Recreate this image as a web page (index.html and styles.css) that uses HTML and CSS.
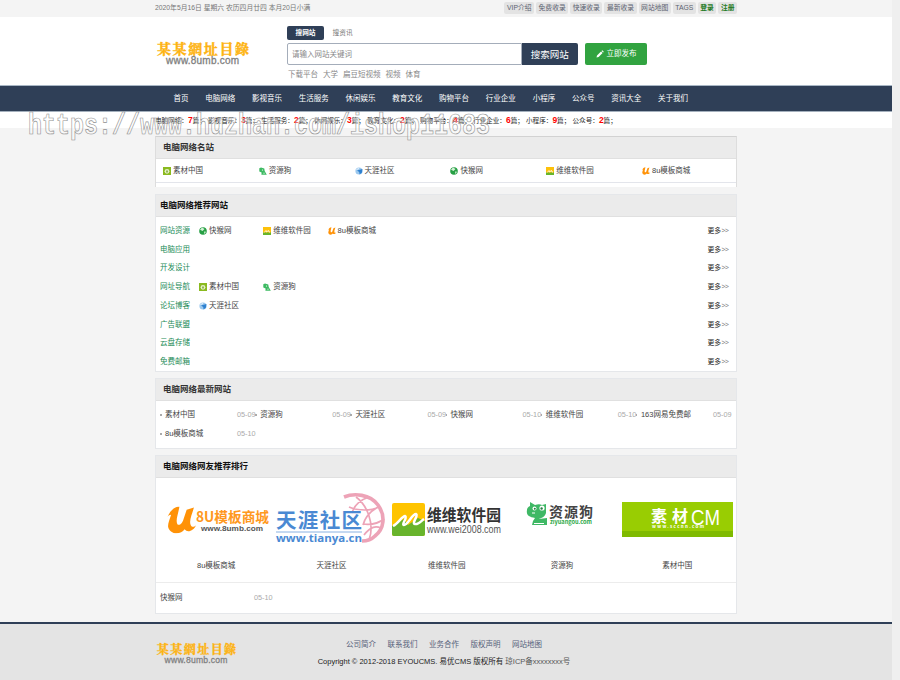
FILE: index.html
```
<!DOCTYPE html>
<html lang="zh-CN">
<head>
  <meta charset="UTF-8">
  <title>电脑网络 - 某某網址目錄</title>
  <link rel="stylesheet" href="styles.css">
</head>
<body>
  <!-- site icons -->
  <svg class="sprite">
    <symbol id="i-sccnn" viewBox="0 0 8 8"><rect width="8" height="8" fill="#8aba1f"/><circle cx="4" cy="4.3" r="2.4" fill="#e4efc8"/><path d="M3 3.5h2v2H3z" fill="#8fb652"/></symbol>
    <symbol id="i-dog" viewBox="0 0 8 8"><path d="M.3 1.2 2 .6l3.3.8.4 2.7L7.8 7.7H2.4L2.6 5.6.3 4.5z" fill="#3dba62"/><circle cx="3.5" cy="3" r=".6" fill="#fff"/><path d="M4 6.2h2" stroke="#fff" stroke-width=".5"/></symbol>
    <symbol id="i-tianya" viewBox="0 0 8 8"><circle cx="4" cy="4" r="3.6" fill="#9cc8ee"/><path d="M2 3.5 7.4 2 7 5.5 4.6 7.6 4.2 5z" fill="#2e80cf"/><path d="M1.5 2.5 4 1.5" stroke="#fff" stroke-width=".8"/></symbol>
    <symbol id="i-globe" viewBox="0 0 8 8"><circle cx="4" cy="4" r="3.8" fill="#27a044"/><path d="M3 .6 5.5 2 3.6 4 1 2.8zM5 4.6l2 .2-1.5 2.4z" fill="#d6f1d9"/></symbol>
    <symbol id="i-wei" viewBox="0 0 8 8"><rect width="8" height="8" fill="#fdc10a"/><path d="M0 5.5h8V8H0z" fill="#67b52b"/><path d="M1.2 5.5 3 3.5l.5 1.5 2-1.5.5 1.5h1" fill="none" stroke="#fff" stroke-width=".8"/></symbol>
    <symbol id="i-u" viewBox="0 0 28 26"><path d="M0 11C3 4 7 0 12 0c-1 7-4 13-2 17 2 2 5-1 6-5l3-9 7-2c-2 7-5 13-3 17 1 2 3 2 5 0-2 5-8 8-11 4-4 6-15 5-16-3C1 16 3 11 4 8c-2 0-3 1-4 3z" fill="#ff9207"/></symbol>
  </svg>

  <div class="topbar">
    <div class="wrap topbar-in">
      <span class="date">2020年5月16日 星期六 农历四月廿四 本月20日小满</span>
      <div class="top-links">
        <a>VIP介绍</a><a>免费收录</a><a>快速收录</a><a>最新收录</a><a>网站地图</a><a>TAGS</a><a class="user">登录</a><a class="user">注册</a>
      </div>
    </div>
  </div>

  <div class="header">
    <div class="wrap header-in">
      <svg class="logo" viewBox="0 0 94 30">
        <text class="logo-cn" x="1" y="14.5" textLength="92">某某網址目錄</text>
        <text class="logo-en" x="10" y="25" textLength="73">www.8umb.com</text>
      </svg>
      <div class="search">
        <div class="tabs"><span class="tab on">搜网站</span><span class="tab">搜资讯</span></div>
        <div class="search-row">
          <div class="field">请输入网站关键词</div>
          <div class="search-btn">搜索网站</div>
          <div class="post-btn">
            <svg viewBox="0 0 8 8"><path d="M.5 7.5 1 5.4 5 1.5 6.6 3 2.6 7zM5.5 1l.8-.8 1.5 1.5-.7.8z" fill="#fff"/></svg>立即发布
          </div>
        </div>
        <div class="hot"><a>下载平台</a><a>大学</a><a>扁豆短视频</a><a>视频</a><a>体育</a></div>
      </div>
    </div>
  </div>

  <div class="nav">
    <div class="wrap nav-in">
      <a>首页</a><a>电脑网络</a><a>影视音乐</a><a>生活服务</a><a>休闲娱乐</a><a>教育文化</a><a>购物平台</a><a>行业企业</a><a>小程序</a><a>公众号</a><a>资讯大全</a><a>关于我们</a>
    </div>
  </div>

  <div class="stats">
    <div class="wrap stats-in">
      <span>电脑网络：<b>7</b>篇；</span><span>影视音乐：<b>3</b>篇；</span><span>生活服务：<b>2</b>篇；</span><span>休闲娱乐：<b>3</b>篇；</span><span>教育文化：<b>2</b>篇；</span><span>购物平台：<b>4</b>篇；</span><span>行业企业：<b>6</b>篇；</span><span class="short">小程序：<b>9</b>篇；</span><span class="short">公众号：<b>2</b>篇；</span>
    </div>
  </div>

  <div class="wrap box famous">
    <h2>电脑网络名站</h2>
    <div class="famous-list">
      <a><svg><use href="#i-sccnn"/></svg>素材中国</a>
      <a><svg><use href="#i-dog"/></svg>资源狗</a>
      <a><svg><use href="#i-tianya"/></svg>天涯社区</a>
      <a><svg><use href="#i-globe"/></svg>快猴网</a>
      <a><svg><use href="#i-wei"/></svg>维维软件园</a>
      <a><svg><use href="#i-u"/></svg>8u模板商城</a>
    </div>
  </div>

  <div class="wrap box recommend">
    <h2>电脑网络推荐网站</h2>
    <div class="rows">
      <div class="row"><span class="cat">网站资源</span><a><svg><use href="#i-globe"/></svg>快猴网</a><a><svg><use href="#i-wei"/></svg>维维软件园</a><a><svg><use href="#i-u"/></svg>8u模板商城</a><span class="more">更多<i>&gt;&gt;</i></span></div>
      <div class="row"><span class="cat">电脑应用</span><span class="more">更多<i>&gt;&gt;</i></span></div>
      <div class="row"><span class="cat">开发设计</span><span class="more">更多<i>&gt;&gt;</i></span></div>
      <div class="row"><span class="cat">网址导航</span><a><svg><use href="#i-sccnn"/></svg>素材中国</a><a><svg><use href="#i-dog"/></svg>资源狗</a><span class="more">更多<i>&gt;&gt;</i></span></div>
      <div class="row"><span class="cat">论坛博客</span><a><svg><use href="#i-tianya"/></svg>天涯社区</a><span class="more">更多<i>&gt;&gt;</i></span></div>
      <div class="row"><span class="cat">广告联盟</span><span class="more">更多<i>&gt;&gt;</i></span></div>
      <div class="row"><span class="cat">云盘存储</span><span class="more">更多<i>&gt;&gt;</i></span></div>
      <div class="row"><span class="cat">免费邮箱</span><span class="more">更多<i>&gt;&gt;</i></span></div>
    </div>
  </div>

  <div class="wrap box newest">
    <h2>电脑网络最新网站</h2>
    <div class="new-list">
      <div class="new-item"><a>素材中国</a><em>05-09</em></div>
      <div class="new-item"><a>资源狗</a><em>05-09</em></div>
      <div class="new-item"><a>天涯社区</a><em>05-09</em></div>
      <div class="new-item"><a>快猴网</a><em>05-10</em></div>
      <div class="new-item"><a>维维软件园</a><em>05-10</em></div>
      <div class="new-item"><a>163网易免费邮</a><em>05-09</em></div>
      <div class="new-item"><a>8u模板商城</a><em>05-10</em></div>
    </div>
  </div>

  <div class="wrap box ranking">
    <h2>电脑网络网友推荐排行</h2>
    <div class="cards">
      <div class="card">
        <svg viewBox="0 0 115 70">
          <use href="#i-u" x="8" y="21.5" width="29" height="27"/>
          <text x="37" y="36.5" font-size="14" font-weight="700" fill="#ff9820" textLength="73" lengthAdjust="spacingAndGlyphs">8U模板商城</text>
          <text class="arial" x="42" y="46" font-size="8" font-weight="700" fill="#555" textLength="62" lengthAdjust="spacingAndGlyphs">www.8umb.com</text>
        </svg>
        <p>8u模板商城</p>
      </div>
      <div class="card">
        <svg viewBox="0 0 115 70">
          <g fill="none" stroke="#eda3b7">
            <path d="M70 12C80 8 96 9 104 20c8 11 6 24-3 31-4 4-8 5-13 5" stroke-width="3.6"/>
            <path d="M75 22c9 4 22 4 30 0M89 39c8 1 16-1 21-5M82 12c11 8 19 27 13 43M95 12c-9 3-15 9-17 16M104 22c-7 4-13 10-15 18M107 43c-5-2-10-2-17 7" stroke-width="1.7"/>
          </g>
          <text x="2" y="42.5" font-size="20.5" font-weight="700" fill="#4a89d3" textLength="86">天涯社区</text>
          <path d="M2 47h86" stroke="#6d9fda" stroke-width=".8"/>
          <text class="open" x="2" y="56.6" font-size="10" font-weight="700" fill="#4a89d3" textLength="86" lengthAdjust="spacingAndGlyphs">www.tianya.cn</text>
        </svg>
        <p>天涯社区</p>
      </div>
      <div class="card">
        <svg viewBox="0 0 115 70">
          <rect x="3" y="18" width="33" height="33" rx="2" fill="#ffc400"/>
          <path d="M3 41 15 34l4 6 10-7 7 3v13a2 2 0 0 1-2 2H5a2 2 0 0 1-2-2z" fill="#68b42c"/>
          <path d="M4 41c5-2 9-10 12-10 3 1-4 9-1 9 4 0 8-11 12-11 3 1-5 10-1 10 3 1 6-3 9-5" fill="none" stroke="#fff" stroke-width="2.4"/>
          <text x="38" y="35.5" font-size="16" font-weight="700" fill="#333" textLength="74" lengthAdjust="spacingAndGlyphs">维维软件园</text>
          <text class="arial" x="38" y="48" font-size="10.5" fill="#555" textLength="74" lengthAdjust="spacingAndGlyphs">www.wei2008.com</text>
        </svg>
        <p>维维软件园</p>
      </div>
      <div class="card">
        <svg viewBox="0 0 115 70">
          <path d="M26 21v-4l5 3c3-1 5-1 7 0l4-1v9c-1 4-5 5-7 6l8-1v7H28l1-4 2-3c-6-1-9-3-8-8 0-2 1-3 3-4z" fill="#3fb865"/>
          <circle cx="30.5" cy="23.5" r="2" fill="#fff"/><circle cx="38" cy="23" r="2.6" fill="#fff"/><circle cx="30.8" cy="23.7" r="1" fill="#277b43"/><circle cx="37.6" cy="23.5" r="1.2" fill="#277b43"/>
          <path d="M30 38.5h10M28 28h3" stroke="#fff" stroke-width="1"/>
          <text x="45" y="32" font-size="14" font-weight="700" fill="#444" textLength="44">资源狗</text>
          <text x="46" y="38.5" font-size="5.5" font-weight="700" fill="#28a745" textLength="42" lengthAdjust="spacingAndGlyphs">ziyuangou.com</text>
        </svg>
        <p>资源狗</p>
      </div>
      <div class="card">
        <svg viewBox="0 0 115 70">
          <rect x="2" y="17" width="111" height="35" fill="#99cd02"/>
          <rect x="2" y="46" width="111" height="6" fill="#7fba00"/>
          <text x="31" y="37" font-size="16" font-weight="700" fill="#fff" textLength="37">素材</text>
          <text class="arial" x="71" y="40" font-size="22" fill="#fff" textLength="29" lengthAdjust="spacingAndGlyphs">CM</text>
          <text x="32" y="43" font-size="4.5" font-weight="700" fill="#fff" textLength="52">www.sccnn.com</text>
        </svg>
        <p>素材中国</p>
      </div>
    </div>
    <div class="rank-row"><a>快猴网</a><em>05-10</em></div>
  </div>

  <div class="footer">
    <div class="wrap footer-in">
      <svg class="foot-logo" viewBox="0 0 94 30">
        <text class="logo-cn" x="1" y="14.5" textLength="92">某某網址目錄</text>
        <text class="logo-en" x="10" y="25" textLength="73">www.8umb.com</text>
      </svg>
      <div class="foot-text">
        <div class="foot-links"><a>公司简介</a><a>联系我们</a><a>业务合作</a><a>版权声明</a><a>网站地图</a></div>
        <p>Copyright © 2012-2018 EYOUCMS. 易优CMS 版权所有 <span>琼ICP备xxxxxxxx号</span></p>
      </div>
    </div>
  </div>

  <svg class="watermark" viewBox="0 0 480 40">
    <text x="8" y="26" textLength="462" lengthAdjust="spacingAndGlyphs">https://www.huzhan.com/ishop11683</text>
  </svg>
</body>
</html>
```
FILE: styles.css
```
* {
  box-sizing: border-box;
}

html {
  background: #efefef;
}

body {
  width: 892px;
  height: 680px;
  margin: 0;
  overflow: hidden;
  display: flex;
  flex-direction: column;
  background: #f4f4f4;
  font: 7.5px/12px "Liberation Sans", "Noto Sans CJK SC", sans-serif;
  color: #444;
}

h2, p {
  margin: 0;
}

em, i {
  font-style: normal;
}

a, em {
  white-space: nowrap;
}

.sprite {
  display: none;
}

.wrap {
  width: 582px;
  margin-left: 155px;
}

/* top */
.topbar {
  height: 17px;
  background: #f4f4f4;
}

.topbar-in {
  display: flex;
  justify-content: space-between;
  align-items: center;
  height: 16px;
  font-size: 6.8px;
  color: #777;
}

.top-links {
  display: flex;
  gap: 2px;
}

.top-links a {
  padding: 0 2.5px;
  border-radius: 2px;
  background: #e3e3e3;
  color: #5b6270;
}

.top-links .user {
  color: #237a23;
  font-weight: bold;
}

.header {
  height: 68px;
  background: #fff;
}

.header-in {
  display: flex;
}

.logo {
  width: 94px;
  height: 30px;
  margin: 22px 37px 0 1px;
}

.logo-cn {
  font: bold 14px "Noto Serif CJK TC", "Noto Sans CJK TC", serif;
  fill: #fdb310;
  stroke: #fdb310;
  stroke-width: 0.4;
}

.logo-en {
  font: 10px "Liberation Sans", sans-serif;
  fill: #808080;
  stroke: #808080;
  stroke-width: 0.3;
}

.search {
  padding-top: 9px;
}

.tabs {
  display: flex;
  height: 17px;
  font-size: 6.7px;
}

.tab {
  height: 14px;
  line-height: 13px;
  padding: 0 8.5px;
  color: #777;
}

.tab.on {
  background: #2f3f57;
  border-radius: 2px;
  color: #fff;
  font-weight: bold;
}

.search-row {
  display: flex;
  height: 21.5px;
  line-height: 21px;
}

.field {
  width: 235px;
  padding-left: 4px;
  border: 1px solid #a4adba;
  border-radius: 2px 0 0 2px;
  color: #888;
}

.search-btn {
  width: 55.5px;
  border-radius: 0 2px 2px 0;
  background: #2f3f57;
  color: #fff;
  font-size: 9.5px;
  line-height: 23px;
  text-align: center;
}

.post-btn {
  display: flex;
  align-items: center;
  justify-content: center;
  gap: 3px;
  width: 62px;
  margin-left: 7.5px;
  border-radius: 2px;
  background: #31a340;
  color: #fff;
}

.post-btn svg {
  width: 8px;
  height: 8px;
}

.hot {
  display: flex;
  gap: 5px;
  padding: 4.5px 1px 0;
  color: #888;
}

/* nav */
.nav {
  height: 27px;
  border-top: 1px solid #a9b7c5;
  border-bottom: 1px solid #a4b0bd;
  background: #2f3f57;
}

.nav-in {
  display: flex;
  padding-left: 10px;
  line-height: 26px;
  color: #fff;
}

.nav-in a {
  padding: 0 8.4px;
}

.stats {
  height: 16px;
  background: #fff;
}

.stats-in {
  display: flex;
  font-size: 6.6px;
  line-height: 16px;
  color: #222;
}

.stats-in span {
  width: 53px;
  white-space: nowrap;
}

.stats-in .short {
  width: 46.5px;
}

.stats-in b {
  font-size: 8.5px;
  color: #f00;
}

/* boxes */
.box {
  background: #fff;
  border: 1px solid #e5e7ea;
}

.box h2 {
  height: 22px;
  padding-left: 7px;
  background: #ebebeb;
  border-bottom: 1px solid #e0e0e0;
  font-size: 8.5px;
  line-height: 21px;
  color: #333;
}

.box svg {
  flex: none;
}

.famous {
  height: 51px;
  margin-top: 8px;
  border-color: #d2d2d2 #ddd;
  border-bottom: 0;
}

.famous-list {
  display: grid;
  grid-template-columns: repeat(6, 95.8px);
  height: 24px;
  padding: 1px 0 0 7px;
  border-bottom: 1px solid #e3e5eb;
}

.famous-list a, .row a {
  display: flex;
  align-items: center;
  gap: 2px;
}

.famous-list svg, .row svg {
  width: 8px;
  height: 8px;
}

.recommend {
  height: 177.5px;
  margin-top: 7px;
}

.recommend h2 {
  padding-left: 4px;
  color: #111;
}

.rows {
  padding-top: 4.5px;
}

.row {
  display: flex;
  height: 18.75px;
  align-items: center;
  padding: 0 7px 0 4px;
}

.row a {
  width: 64.3px;
}

.cat {
  width: 39px;
  color: #1c8c58;
}

.more {
  margin-left: auto;
  width: 21.5px;
  white-space: nowrap;
  font-size: 6.8px;
  color: #222;
}

.more i {
  font: 7px "Noto Sans", sans-serif;
  margin-left: 0.5px;
  letter-spacing: -0.6px;
  color: #888;
}

.newest {
  height: 70.5px;
  margin-top: 6.5px;
}

.new-list {
  display: grid;
  grid-template-columns: repeat(6, 95.2px);
  grid-auto-rows: 19px;
  padding: 4px 0 0 4px;
  line-height: 19px;
}

.new-item {
  display: flex;
}

.new-item::before {
  content: "";
  flex: none;
  width: 1.5px;
  height: 1.5px;
  margin: 9px 3.5px 0 0;
  background: #aaa;
}

.new-item a {
  flex: none;
  width: 72px;
}

.new-item em, .rank-row em {
  font-size: 7.3px;
  color: #aaa;
}

.ranking {
  height: 159px;
  margin-top: 6.5px;
}

.ranking h2 {
  color: #111;
}

.cards {
  display: grid;
  grid-template-columns: repeat(5, 115.3px);
  height: 104.5px;
  padding: 6.5px 0 0 2.5px;
  border-bottom: 1px solid #ececec;
}

.card svg {
  display: block;
  width: 115px;
  height: 70px;
  font-family: "Noto Sans CJK SC", sans-serif;
}

.card .open {
  font-family: "Open Sans", sans-serif;
}

.card .arial {
  font-family: "Liberation Sans", sans-serif;
}

.card p {
  padding-top: 5px;
  text-align: center;
}

.rank-row {
  display: flex;
  padding-left: 4px;
  line-height: 30px;
}

.rank-row a {
  width: 94px;
}

/* footer */
.footer {
  flex: 1;
  margin-top: 7.5px;
  border-top: 2.5px solid #2f3f57;
  background: #e4e4e4;
}

.footer-in {
  display: flex;
}

.foot-logo {
  width: 81px;
  height: 26px;
  margin: 17px 0 0 1px;
}

.foot-text {
  width: 254px;
  margin: 15.5px 0 0 80px;
  text-align: center;
  white-space: nowrap;
  color: #222;
}

.foot-links {
  display: flex;
  justify-content: center;
  gap: 11.5px;
  margin-bottom: 5px;
  color: #56617a;
}

.foot-text span {
  color: #555;
}

.watermark {
  position: absolute;
  left: 20px;
  top: 108px;
  width: 480px;
  height: 40px;
}

.watermark text {
  font: bold 30px "Liberation Mono", monospace;
  fill: rgba(255, 255, 255, 0.45);
  stroke: #8f8f8f;
  stroke-width: 0.7;
}
```
